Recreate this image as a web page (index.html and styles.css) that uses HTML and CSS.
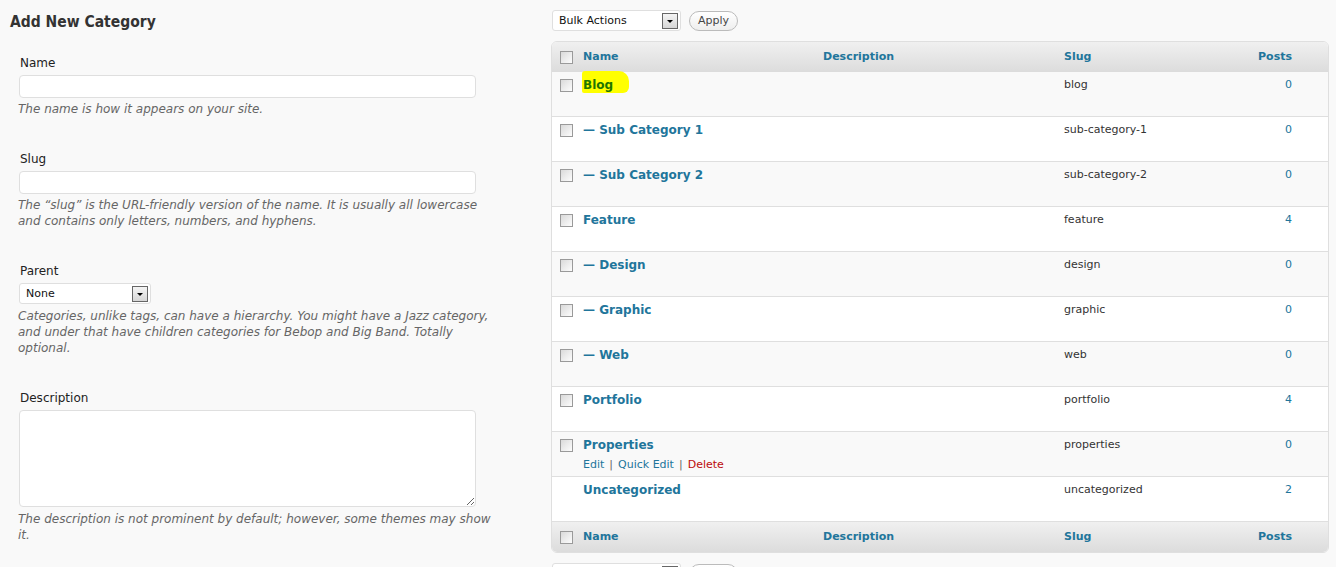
FILE: index.html
```html
<!DOCTYPE html>
<html lang="en">
<head>
<meta charset="utf-8">
<title>Categories</title>
<link rel="stylesheet" href="styles.css">
</head>
<body>
<div class="page">
  <div class="col-left">
    <h3 class="form-title">Add New Category</h3>
    <form class="form-wrap">
      <div class="field field-first">
        <label class="field-label">Name</label>
        <input class="text-input" type="text">
        <p class="hint">The name is how it appears on your site.</p>
      </div>
      <div class="field">
        <label class="field-label">Slug</label>
        <input class="text-input" type="text">
        <p class="hint">The “slug” is the URL-friendly version of the name. It is usually all lowercase and contains only letters, numbers, and hyphens.</p>
      </div>
      <div class="field">
        <label class="field-label">Parent</label>
        <div class="fake-select parent-select"><span>None</span><span class="arrow-box"><span class="arrow"></span></span></div>
        <p class="hint hint-after-select">Categories, unlike tags, can have a hierarchy. You might have a Jazz category, and under that have children categories for Bebop and Big Band. Totally optional.</p>
      </div>
      <div class="field">
        <label class="field-label">Description</label>
        <textarea class="text-area"></textarea>
        <p class="hint hint-after-select">The description is not prominent by default; however, some themes may show it.</p>
      </div>
    </form>
  </div>
  <div class="col-right">
    <div class="tablenav">
      <div class="fake-select bulk-select"><span>Bulk Actions</span><span class="arrow-box"><span class="arrow"></span></span></div>
      <button class="apply-btn" type="button">Apply</button>
    </div>
    <table class="cat-table">
      <colgroup>
        <col class="c-cb"><col class="c-name"><col class="c-desc"><col class="c-slug"><col class="c-posts">
      </colgroup>
      <thead>
        <tr><th class="cb"><input type="checkbox" class="chk"></th><th>Name</th><th>Description</th><th>Slug</th><th class="num">Posts</th></tr>
      </thead>
      <tbody>
        <tr class="alt"><td class="cb"><input type="checkbox" class="chk"></td><td><a class="row-title hl">Blog</a></td><td></td><td class="slug">blog</td><td class="num">0</td></tr>
        <tr><td class="cb"><input type="checkbox" class="chk"></td><td><a class="row-title">— Sub Category 1</a></td><td></td><td class="slug">sub-category-1</td><td class="num">0</td></tr>
        <tr class="alt"><td class="cb"><input type="checkbox" class="chk"></td><td><a class="row-title">— Sub Category 2</a></td><td></td><td class="slug">sub-category-2</td><td class="num">0</td></tr>
        <tr><td class="cb"><input type="checkbox" class="chk"></td><td><a class="row-title">Feature</a></td><td></td><td class="slug">feature</td><td class="num">4</td></tr>
        <tr class="alt"><td class="cb"><input type="checkbox" class="chk"></td><td><a class="row-title">— Design</a></td><td></td><td class="slug">design</td><td class="num">0</td></tr>
        <tr><td class="cb"><input type="checkbox" class="chk"></td><td><a class="row-title">— Graphic</a></td><td></td><td class="slug">graphic</td><td class="num">0</td></tr>
        <tr class="alt"><td class="cb"><input type="checkbox" class="chk"></td><td><a class="row-title">— Web</a></td><td></td><td class="slug">web</td><td class="num">0</td></tr>
        <tr><td class="cb"><input type="checkbox" class="chk"></td><td><a class="row-title">Portfolio</a></td><td></td><td class="slug">portfolio</td><td class="num">4</td></tr>
        <tr class="alt"><td class="cb"><input type="checkbox" class="chk"></td><td><a class="row-title">Properties</a><div class="row-actions"><a class="act">Edit</a><span class="sep">|</span><a class="act">Quick Edit</a><span class="sep">|</span><a class="act del">Delete</a></div></td><td></td><td class="slug">properties</td><td class="num">0</td></tr>
        <tr><td class="cb"></td><td><a class="row-title">Uncategorized</a></td><td></td><td class="slug">uncategorized</td><td class="num">2</td></tr>
      </tbody>
      <tfoot>
        <tr><th class="cb"><input type="checkbox" class="chk"></th><th>Name</th><th>Description</th><th>Slug</th><th class="num">Posts</th></tr>
      </tfoot>
    </table>
    <div class="tablenav tablenav-bottom">
      <div class="fake-select bulk-select"><span>Bulk Actions</span><span class="arrow-box"><span class="arrow"></span></span></div>
      <button class="apply-btn" type="button">Apply</button>
    </div>
  </div>
</div>
</body>
</html>
```
FILE: styles.css
```css
html, body {
  margin: 0;
  padding: 0;
  overflow: hidden;
  background: #f9f9f9;
}
body {
  font-family: "DejaVu Sans", Verdana, sans-serif;
  color: #333;
}
.page {
  display: flex;
  padding: 0 7px 0 10px;
}
.col-left {
  width: 541px;
  flex: none;
}
.col-right {
  width: 778px;
  flex: none;
}
.form-title {
  margin: 0;
  padding-top: 12px;
  font-family: "DejaVu Sans Condensed", "DejaVu Sans", sans-serif;
  font-stretch: condensed;
  font-size: 15.5px;
  line-height: 20px;
  font-weight: bold;
  color: #333;
}
.form-wrap {
  margin: 0;
  padding-left: 9px;
}
.field {
  margin-top: 34px;
}
.field-first {
  margin-top: 23px;
}
.field-label {
  display: block;
  padding-left: 1px;
  font-size: 12px;
  line-height: 16px;
  color: #222;
}
.text-input {
  display: block;
  box-sizing: border-box;
  width: 457px;
  height: 23px;
  margin: 4px 0 0;
  border: 1px solid #dfdfdf;
  border-radius: 4px;
  background: #fff;
}
.text-area {
  display: block;
  box-sizing: border-box;
  width: 457px;
  height: 97px;
  margin: 4px 0 0;
  border: 1px solid #dfdfdf;
  border-radius: 4px;
  background: #fff;
  font-family: inherit;
}
.hint {
  margin: 3px 0 0 -1px;
  width: 482px;
  font-size: 12px;
  line-height: 16px;
  font-style: italic;
  color: #666;
}
.hint-after-select {
  margin-top: 4px;
}
.fake-select {
  box-sizing: border-box;
  display: flex;
  align-items: center;
  justify-content: space-between;
  height: 21px;
  border: 1px solid #dfdfdf;
  border-radius: 3px;
  background: #fff;
  font-size: 11px;
  color: #111;
  padding: 0 2px 0 6px;
}
.parent-select {
  width: 132px;
  margin-top: 4px;
}
.bulk-select {
  width: 129px;
}
.arrow-box {
  box-sizing: border-box;
  width: 16px;
  height: 16px;
  border: 1px solid #666;
  background: linear-gradient(#f4f4f4, #d6d6d6);
  display: flex;
  align-items: center;
  justify-content: center;
}
.arrow {
  width: 0;
  height: 0;
  border-left: 3px solid transparent;
  border-right: 3px solid transparent;
  border-top: 3px solid #000;
  margin-top: 2px;
}
.tablenav {
  display: flex;
  align-items: center;
  gap: 8px;
  margin: 10px 0 0 1px;
  height: 21px;
}
.apply-btn {
  box-sizing: border-box;
  height: 20px;
  width: 49px;
  padding: 0;
  border: 1px solid #bbb;
  border-radius: 11px;
  background: linear-gradient(#fff, #eee);
  font-family: inherit;
  font-size: 11px;
  color: #464646;
}
.cat-table {
  margin-top: 10px;
  width: 778px;
  table-layout: fixed;
  border-collapse: separate;
  border-spacing: 0;
  border: 1px solid #dfdfdf;
  border-radius: 6px;
  overflow: hidden;
  background: #fff;
}
.c-cb { width: 25px; }
.c-name { width: 240px; }
.c-desc { width: 241px; }
.c-slug { width: 172px; }
.c-posts { width: 98px; }
.cat-table th {
  box-sizing: border-box;
  height: 30px;
  padding: 0 6px;
  text-align: left;
  vertical-align: middle;
  font-size: 11px;
  line-height: 14px;
  font-weight: bold;
  color: #21759b;
  background: linear-gradient(#f0f0f0, #dcdcdc);
}
.cat-table th.cb {
  padding: 0 0 0 8px;
}
.cat-table th.num,
.cat-table td.num {
  text-align: right;
  padding-right: 36px;
}
.cat-table td {
  box-sizing: border-box;
  height: 45px;
  padding: 6px 6px 0;
  vertical-align: top;
  border-bottom: 1px solid #dfdfdf;
  font-size: 11px;
  line-height: 14px;
  background: #fff;
}
.cat-table tr.alt td {
  background: #f9f9f9;
}
.cat-table td.cb {
  padding: 7px 0 0 8px;
}
.chk {
  -webkit-appearance: none;
  appearance: none;
  display: block;
  box-sizing: border-box;
  width: 13px;
  height: 13px;
  margin: 0;
  border: 1px solid #9a9a9a;
  background: linear-gradient(135deg, #dadada, #fdfdfd);
}
.row-title {
  font-size: 12px;
  font-weight: bold;
  color: #21759b;
  line-height: 14px;
}
.row-title.hl {
  display: inline-block;
  color: #217500;
  background: #ffff00;
  padding: 7px 16px 1px 1px;
  margin: -7px -16px 0 -1px;
  border-radius: 3px 10px 6px 2px;
}
.slug {
  color: #333;
}
td.num {
  color: #21759b;
}
.row-actions {
  margin-top: 5px;
  font-size: 11px;
  line-height: 14px;
}
.act {
  color: #21759b;
}
.act.del {
  color: #bc0b0b;
}
.sep {
  color: #666;
  margin: 0 5px;
}
```
